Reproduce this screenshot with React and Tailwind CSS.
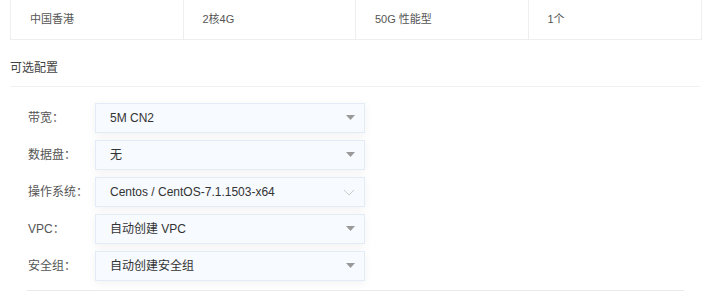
export default function App() {
  const rows = [
    { label: "带宽：", value: "5M CN2", arrow: "tri" },
    { label: "数据盘：", value: "无", arrow: "tri" },
    { label: "操作系统：", value: "Centos / CentOS-7.1.1503-x64", arrow: "chev" },
    { label: "VPC：", value: "自动创建 VPC", arrow: "tri" },
    { label: "安全组：", value: "自动创建安全组", arrow: "tri" },
  ];
  const cells = ["中国香港", "2核4G", "50G 性能型", "1个"];
  return (
    <div className="w-[710px] h-[300px] bg-white overflow-hidden" style={{ fontFamily: '"Liberation Sans", "Noto Sans CJK SC", sans-serif' }}>
      <div className="ml-[10px] mr-[8px] grid grid-cols-4 border-l border-r border-b border-[#eeeeee] h-[40px]">
        {cells.map((c, i) => (
          <div key={i} className={`flex items-center pl-[19px] text-[11px] text-[#555] ${i < 3 ? "border-r border-[#eeeeee]" : ""}`}>
            {c}
          </div>
        ))}
      </div>
      <div className="ml-[10px] mr-[10px] mt-[20px] pb-[10px] border-b border-[#f0f0f0] text-[12px] text-[#444] leading-[16px]">
        可选配置
      </div>
      <div className="mt-[16px] ml-[28px] flex flex-col gap-[7px]">
        {rows.map((r, i) => (
          <div key={i} className="flex items-center">
            <div className="w-[67px] text-[12px] text-[#555]">{r.label}</div>
            <div className="w-[270px] h-[30px] bg-[#f7faff] border border-[#e3ebf7] shadow-[0_2px_10px_rgba(0,0,0,0.06)] flex items-center justify-between pl-[14px] pr-[9px] text-[12px] text-[#333]">
              <span>{r.value}</span>
              {r.arrow === "tri" ? (
                <svg width="9" height="6" viewBox="0 0 9 6"><path d="M0 0h9L4.5 5z" fill="#999" /></svg>
              ) : (
                <svg width="12" height="7" viewBox="0 0 12 7"><path d="M1 1l5 5 5-5" fill="none" stroke="#ccc" strokeWidth="1" /></svg>
              )}
            </div>
          </div>
        ))}
      </div>
      <div className="mt-[9px] ml-[27px] w-[657px] border-b border-[#eaeaea]" />
    </div>
  );
}
